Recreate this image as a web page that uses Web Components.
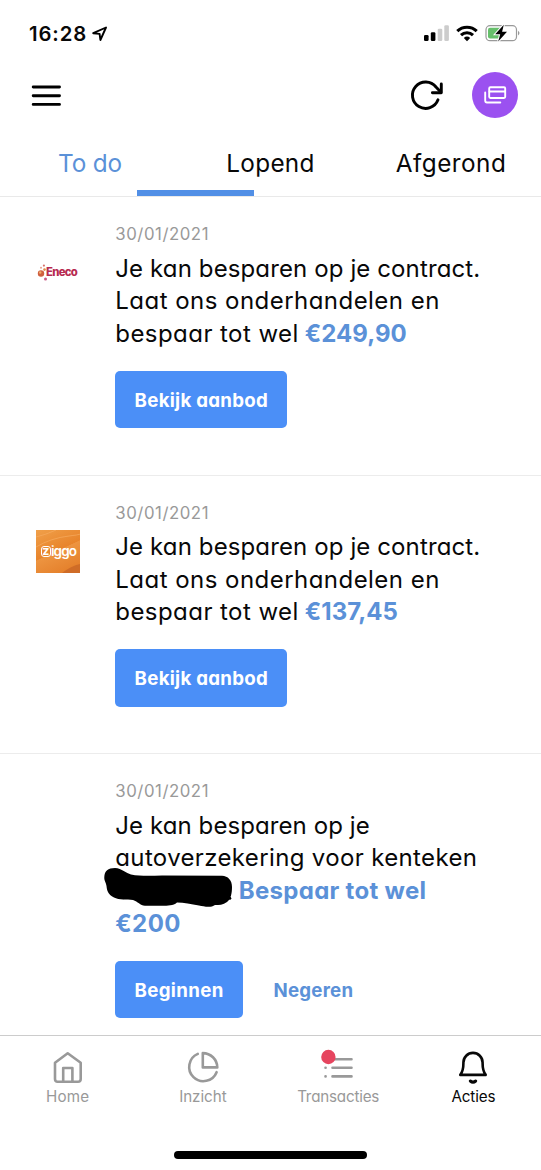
<!DOCTYPE html>
<html lang="nl">
<head>
<meta charset="utf-8">
<title>Acties</title>
<style>
html,body{margin:0;padding:0;background:#fff}
body{width:541px;height:1170px;overflow:hidden;font-family:Inter,Lato,sans-serif;font-feature-settings:"cv11" 1;color:#080808}
</style>
</head>
<body>
<app-screen></app-screen>
<script>
const define = (name, html, setup) => {
  const t = document.createElement('template');
  t.innerHTML = html;
  customElements.define(name, class extends HTMLElement {
    connectedCallback() {
      if (this.shadowRoot) return;
      this.attachShadow({mode: 'open'}).append(t.content.cloneNode(true));
      if (setup) setup(this, this.shadowRoot);
    }
  });
};

/* One line of text whose tracking is adjusted to fill the width in "w". */
define('fit-text', `<style>
:host{display:block;white-space:nowrap;flex:none}
span{display:inline-block}
</style><span><slot></slot></span>`, (el, root) => {
  const w = parseFloat(el.getAttribute('w'));
  const span = root.querySelector('span');
  const natural = span.getBoundingClientRect().width;
  el.style.width = w + 'px';
  span.style.letterSpacing = ((w - natural) / Math.max(1, el.textContent.length)) + 'px';
});

define('status-bar', `<style>
:host{display:flex;height:66px;box-sizing:border-box;padding:0 20px 0 29px;align-items:center;justify-content:space-between}
div{display:flex;align-items:center}
.time{gap:5px;font-size:20.3px;font-weight:600;line-height:24px;padding-top:1px}
svg{display:block}
</style>
<div class="time"><fit-text w="58">16:28</fit-text>
<svg width="16" height="16" viewBox="0 0 16 16"><path d="M1.2 7.2 14 1.5 8.4 14 7.6 7.900Z" fill="none" stroke="#000" stroke-width="1.9" stroke-linejoin="round"/></svg></div>
<div>
<svg width="98" height="20" viewBox="423 23 98 20">
<rect x="424" y="35" width="4.6" height="6" rx="1.3"/><rect x="430.800" y="32.3" width="4.6" height="8.7" rx="1.3"/>
<g fill="#ccc"><rect x="437.7" y="28.7" width="4.6" height="12.3" rx="1.3"/><rect x="444.3" y="25.3" width="4.6" height="15.7" rx="1.3"/></g>
<g fill="none" stroke="#000" stroke-width="3.100"><path d="M457.3 31.1a14 14 0 0 1 19.4 0"/><path d="M461 35.2a8.7 8.7 0 0 1 12 0"/></g>
<path d="M463.8 37.9a4.8 4.8 0 0 1 6.4 0L467 41.2Z"/>
<rect x="486" y="25.7" width="30.5" height="15" rx="4" fill="#fff" stroke="#999" stroke-width="1.2"/>
<path d="M518 30.7q3 2.3 0 4.8z" fill="#999"/>
<path d="M490 27.8h11v10.8h-11a2 2 0 0 1-2-2v-6.800a2 2 0 0 1 2-2z" fill="#66bf6b"/>
<path d="M503.800 24.800 495.200 34.200h5l-2 7.400 8.800-9.800h-4.900z" fill="#000" stroke="#fff" stroke-width="2" paint-order="stroke"/>
</svg></div>`);

define('app-header', `<style>
:host{display:flex;height:64px;box-sizing:border-box;padding:0 23px 6px 31px;align-items:center;justify-content:space-between}
div{display:flex;align-items:center;gap:28px}
svg{display:block}
.card{width:46px;height:46px;border-radius:50%;background:#9b51f0;display:grid;place-items:center}
</style>
<svg width="31" height="24" viewBox="0 0 31 24" stroke="#000" stroke-width="2.9" stroke-linecap="round"><path d="M2.200 4H28.500M2.200 12.700H28.500M2.200 21.400H28.500"/></svg>
<div>
<svg width="34" height="34" viewBox="410 78 34 34" fill="none" stroke="#000" stroke-width="2.9" stroke-linecap="round" stroke-linejoin="round"><path d="M438 99.800A13.200 13.200 0 1 1 436 87l4.700 5"/><path d="M441.300 84v8.700h-8.900"/></svg>
<span class="card"><svg width="24" height="20" viewBox="0 0 24 20" fill="none" stroke="#fff" stroke-width="1.9" stroke-linejoin="round" stroke-linecap="round"><rect x="6.200" y="2.200" width="16" height="10.800" rx="1.200"/><path d="M6.500 6.500H22M2.200 7.500V15.500Q2.200 17.500 4 17.500H17.300"/></svg></span>
</div>`);

define('tab-bar', `<style>
:host{display:grid;height:67px;box-sizing:border-box;border-bottom:1px solid #e9e9e9;position:relative;grid-template-columns:180px 181px 180px;font-size:24.300px;line-height:67.500px;justify-items:center}
.on{color:#5b91d8}
i{position:absolute;left:136.500px;bottom:.5px;width:117.500px;height:6px;background:#518fe6}
</style>
<fit-text class="on" w="64">To do</fit-text><fit-text w="88.500">Lopend</fit-text><fit-text w="110.500">Afgerond</fit-text><i></i>`);

define('action-button', `<style>
:host{display:flex;height:57.500px;box-sizing:border-box;padding:2.500px 19.300px 0;border-radius:5px;background:#4b8ff7;color:#fff;font-size:18.700px;font-weight:700;line-height:24px;align-items:center}
:host([plain]){background:none;color:#5b91d8;padding:2.500px 11.500px 0}
</style><slot></slot>`);

define('action-card', `<style>
:host{display:grid;grid-template-columns:115.300px 1fr;height:278.700px;box-sizing:border-box;border-bottom:1px solid #ececec;padding-top:25px}
:host([last]){border:0}
.logo{padding:29.500px 0 0 36px}
.date{font-size:16.800px;line-height:24px;color:#999}
.msg{display:flex;flex-direction:column;margin-top:6.500px;font-size:24px;line-height:32.600px}
.actions{display:flex;gap:19px;margin-top:20.500px}
</style>
<div class="logo"><slot name="logo"></slot></div>
<div><div class="date"><fit-text w="93.700">30/01/2021</fit-text></div>
<div class="msg"><slot></slot></div><div class="actions"><slot name="actions"></slot></div></div>`);

define('text-row', `<style>
:host{display:flex;height:32.600px;gap:6px;position:relative}
:host([indent]){padding-left:123.500px}
::slotted(b){display:block;color:#5b91d8;font-weight:700}
</style><slot></slot>`);

define('marker-scribble', `<style>
:host{position:absolute;left:-12.300px;top:-8px;width:130px;height:42px}
svg{display:block}
</style><svg width="130" height="42" viewBox="103 867 130 42"><path d="M104.300 877C104.500 871 108 868 115 868C122 868.500 126 873 131 874.500C140 876.300 150 875.800 162 875.600L222 875.700C228 876 232 880 232 887C232 893 231 899 227 902C223 905 219 905 215 905C211 908 204 906.500 199 905.500C191 904 184 902.500 177 902.500C173 906 168 905.500 162 905.800H145C140 905.500 138 901.500 133 900C127 899.500 119 900 114 897.500C109 895 107 892 106.500 886C106 882 104 881 104.300 877Z"/><circle cx="229.800" cy="898.300" r="1.500"/></svg>`);

define('eneco-logo', `<style>:host{display:flex;align-items:center;height:41px;color:#b72a50;font-size:11.300px;font-weight:800;line-height:14px}svg{display:block;margin-left:1px}</style>
<svg width="9" height="20" viewBox="0 0 9 20" overflow="visible"><circle cx="4" cy="11.500" r="3.200" fill="#cf5f3f"/><circle cx="3.200" cy="10.500" r="1.200" fill="#efad6b"/><circle cx="4" cy="5.800" r="1" fill="#e9a18e"/><circle cx="6.900" cy="3.600" r="1.100" fill="#d9716a"/><circle cx="7.500" cy="7.600" r="1.300" fill="#e08a4c"/><circle cx="8.500" cy="17" r="1.500" fill="#c95b86"/></svg><fit-text w="31">Eneco</fit-text>`);

define('ziggo-logo', `<style>:host{display:flex;position:relative;width:43.500px;height:43px;box-sizing:border-box;padding:0 2px 0 4.500px;align-items:center;background:linear-gradient(155deg,#f0a04a,#e8842b 48%,#ed9440 49%,#e27a25);color:#fff;font-size:13.500px;line-height:16px;font-weight:600;overflow:hidden}
svg{position:absolute;inset:0}b{font-size:9.500px;line-height:10px;width:8.500px;height:9px;flex:none;border:1.200px solid #fff;border-radius:3px;display:grid;place-items:center;position:relative}fit-text{position:relative;margin-left:0;top:-.5px}</style>
<svg width="44" height="43" viewBox="0 0 44 43" fill="none" stroke="#f8ad62" stroke-opacity=".65"><path d="M0 7Q9 5 20 0M0 17Q15 8 33 6T44 2"/><path d="M26 43Q35 36 44 34V43Z" fill="#cf6c27" stroke="none"/></svg><b>Z</b><fit-text w="25">iggo</fit-text>`);

define('nav-item', `<style>
:host{display:flex;flex-direction:column;align-items:center;color:#999;font-size:15.200px;line-height:20px;padding-top:14px}
:host([on]){color:#080808}
::slotted(svg){display:block;margin-bottom:2.500px;overflow:visible}
</style><slot></slot>`);

define('bottom-nav', `<style>
:host{display:grid;grid-template-columns:repeat(4,1fr);grid-template-rows:1fr 19px;justify-items:stretch;height:135px;box-sizing:border-box;border-top:1px solid #ccc;background:#fff}
.home{grid-column:1/-1;justify-self:center;width:193px;height:8px;border-radius:4px;background:#000}
svg{fill:none;stroke:currentColor;stroke-width:2.600;stroke-linecap:round;stroke-linejoin:round}
</style>
<nav-item><svg width="34" height="34" viewBox="0 0 34 34"><path d="M16.700 3.300 29.700 12.700V29Q29.700 31.800 27 31.800H6.700Q4 31.800 4 29V12.700ZM12.200 31.500V18H21.400V31.500"/></svg><fit-text w="43.500">Home</fit-text></nav-item>
<nav-item><svg width="34" height="34" viewBox="0 0 34 34"><path d="M11.800 3.900A14.200 14.200 0 1 0 30.600 22.200"/><path d="M16.800 3.100A14.500 14.500 0 0 1 31.300 17.400H16.800Z"/></svg><fit-text w="47.500">Inzicht</fit-text></nav-item>
<nav-item><svg width="34" height="34" viewBox="0 0 34 34"><path d="M11.500 9.200H30.500M11.500 17.700H30.500M11.500 26.400H30.500M4.500 17.700h.1M4.500 26.400h.1"/><circle cx="7.400" cy="7" r="7.200" fill="#e6455f" style="stroke:none"/></svg><fit-text w="82">Transacties</fit-text></nav-item>
<nav-item on><svg width="34" height="34" viewBox="0 0 34 34"><path d="M4.300 24.900C7.600 20.500 7.400 17 7.400 12.500A9.600 9.600 0 0 1 26.600 12.500C26.600 17 26.400 20.500 29.700 24.900Z"/><path d="M14.300 31Q17 33.300 19.700 31" style="stroke-width:3"/></svg><fit-text w="44">Acties</fit-text></nav-item>
<span class="home"></span>`);

define('app-screen', `<style>
:host{display:flex;flex-direction:column;width:541px;height:1170px;background:#fff;overflow:hidden}
main{height:838px;overflow:hidden}
b{display:block;font-weight:700;color:#5b91d8}
</style>
<status-bar></status-bar><app-header></app-header><tab-bar></tab-bar>
<main>
<action-card><eneco-logo slot="logo"></eneco-logo>
<fit-text w="365">Je kan besparen op je contract.</fit-text><fit-text w="324.500">Laat ons onderhandelen en</fit-text>
<text-row><fit-text w="183.500">bespaar tot wel</fit-text><b><fit-text w="102">€249,90</fit-text></b></text-row>
<action-button slot="actions"><fit-text w="133.500">Bekijk aanbod</fit-text></action-button></action-card>
<action-card><ziggo-logo slot="logo"></ziggo-logo>
<fit-text w="365">Je kan besparen op je contract.</fit-text><fit-text w="324.500">Laat ons onderhandelen en</fit-text>
<text-row><fit-text w="183.500">bespaar tot wel</fit-text><b><fit-text w="93">€137,45</fit-text></b></text-row>
<action-button slot="actions"><fit-text w="133.500">Bekijk aanbod</fit-text></action-button></action-card>
<action-card last>
<fit-text w="254.500">Je kan besparen op je</fit-text><fit-text w="362">autoverzekering voor kenteken</fit-text>
<text-row indent><marker-scribble></marker-scribble><b><fit-text w="187.500">Bespaar tot wel</fit-text></b></text-row>
<b><fit-text w="65.500">€200</fit-text></b>
<action-button slot="actions"><fit-text w="89">Beginnen</fit-text></action-button><action-button plain slot="actions"><fit-text w="80">Negeren</fit-text></action-button></action-card>
</main>
<bottom-nav></bottom-nav>`);
</script>
</body>
</html>
